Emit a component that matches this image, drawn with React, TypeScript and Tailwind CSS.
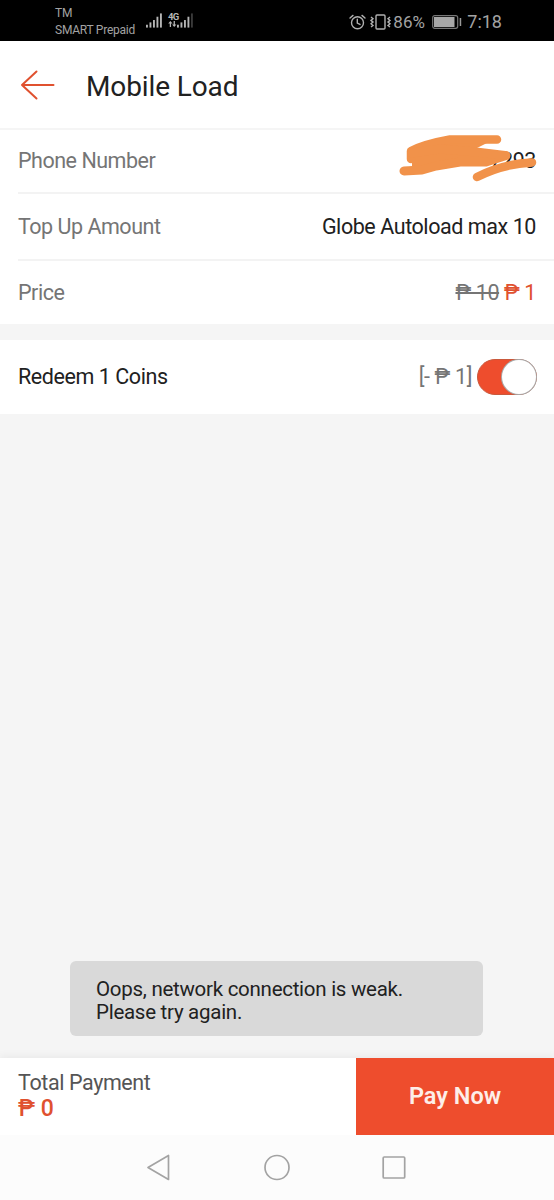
import React, { useState } from 'react';

const labelText = "text-[21.5px] leading-6 tracking-[-0.48px] text-[#757575]";
const valueText = "text-[21.5px] leading-6 tracking-[-0.43px] text-[#212121]";

function SignalBars({ dimLast = false }: { dimLast?: boolean }) {
    return (
        <svg width="17" height="15" viewBox="0 0 18 15" fill="#b5b5b5">
            <rect x="0" y="12" width="2" height="3" />
            <rect x="3.7" y="9.5" width="2" height="5.5" />
            <rect x="7.4" y="7" width="2" height="8" />
            <rect x="11.1" y="3.5" width="2" height="11.5" />
            <rect x="14.8" y="0" width="2" height="15" fill={dimLast ? '#3a3a3a' : '#b5b5b5'} />
        </svg>
    );
}

function StatusBar() {
    return (
        <div className="h-[41px] bg-black flex items-start text-[#a3a3a3]">
            <div className="ml-[55px] w-[91px] pt-[5px] text-[12px] leading-[17px] tracking-[-0.25px] whitespace-nowrap">
                <p>TM</p>
                <p>SMART Prepaid</p>
            </div>
            <div className="mt-[13px]"><SignalBars /></div>
            <div className="ml-[5px] mt-[12px] w-[10px] h-[18px]">
                <p className="text-[9.5px] leading-[9px] font-bold tracking-[-0.8px] text-[#b5b5b5]">4G</p>
                <svg width="9" height="6" viewBox="0 0 10 7" fill="#b5b5b5">
                    <path d="M2.5 0L5 3H3.3V7H1.8V3H0z" />
                    <path d="M7 7L4.6 4H6.3V0H7.8V4H9.5z" />
                </svg>
            </div>
            <div className="mt-[13px] -ml-px"><SignalBars dimLast /></div>

            <div className="ml-auto mr-[52px] h-[43px] flex items-center">
                {/* alarm */}
                <svg width="17" height="16" viewBox="0 0 17 16" fill="none" stroke="#b0b0b0" strokeWidth="1.4" strokeLinecap="round">
                    <circle cx="8.5" cy="8.7" r="6" />
                    <path d="M8.3 5.2V9L11 10.4M1 4L4 1.4M16 4L13 1.4" />
                </svg>
                {/* vibrate */}
                <svg className="ml-[4px]" width="22" height="16" viewBox="0 0 22 16" fill="none" stroke="#b0b0b0" strokeWidth="1.4">
                    <rect x="6" y="1" width="9" height="14" rx="1" />
                    <path d="M1 3L3 4.7L1 6.4L3 8.1L1 9.8L3 11.5L1 13M20 3L18 4.7L20 6.4L18 8.1L20 9.8L18 11.5L20 13" />
                </svg>
                <span className="ml-px w-[39px] text-[17px] leading-5 tracking-[0.1px] whitespace-nowrap">86%</span>
                {/* battery */}
                <svg width="30" height="14" viewBox="0 0 30 14" fill="none">
                    <rect x="0.7" y="0.7" width="25" height="12.6" rx="2" stroke="#777" strokeWidth="1.2" />
                    <rect x="2" y="2" width="20.5" height="10" fill="#a8a8a8" />
                    <rect x="27.7" y="3" width="1.5" height="8" fill="#999" />
                </svg>
                <span className="ml-[5px] text-[18px] leading-5">7:18</span>
            </div>
        </div>
    );
}

function Row({ label, children }: { label: string; children: React.ReactNode }) {
    return (
        <div className="h-full pr-[18px] flex items-center justify-between">
            <span className={labelText}>{label}</span>
            {children}
        </div>
    );
}

export default function App() {
    const [redeem, setRedeem] = useState(true);

    return (
        <div className="w-[554px] h-[1200px] flex flex-col bg-[#f5f5f5] font-['Roboto',sans-serif] overflow-hidden">
            <StatusBar />

            <header className="h-[87px] bg-white flex items-center">
                <svg className="ml-[20px]" width="35" height="30" viewBox="0 0 35 30" fill="none" stroke="#e0512f" strokeWidth="2" strokeLinecap="round" strokeLinejoin="round">
                    <path d="M33.5 15H2M16.5 1.5L2 15L16.5 28.5" />
                </svg>
                <h1 className="ml-[31px] mt-[4px] text-[28px] leading-8 tracking-[-0.12px] text-[#212121]">Mobile Load</h1>
            </header>

            <section className="bg-white border-t-2 border-[#f5f5f5] pl-[18px]">
                <div className="h-[64px] border-b-2 border-[#f3f3f3]">
                    <Row label="Phone Number">
                        <div className="relative pt-px">
                            <span className={valueText}>7293</span>
                            {/* scribble over the number */}
                            <svg className="absolute -right-[2px] -top-[16px]" width="140" height="50" viewBox="398 132 140 50" fill="none" stroke="#f1924a" strokeLinecap="round" strokeLinejoin="round">
                                <path d="M412 148L424 144L440 140L462 138H497L477 148L505 156L490 164L460 166L452 165L445 169L435 166H412Z" fill="#f1924a" stroke="none" />
                                <path d="M497 139.5H450Q425 144 411 151V159" strokeWidth="8.5" />
                                <path d="M404 171L422 170L436 166L460 162H486L506 155.5" strokeWidth="9" />
                                <path d="M412 153L440 149L476 152L505 155.5" strokeWidth="9" />
                                <path d="M477 177Q502 164 532 162.5" strokeWidth="8.5" />
                            </svg>
                        </div>
                    </Row>
                </div>
                <div className="h-[67px] border-b-2 border-[#f3f3f3]">
                    <Row label="Top Up Amount">
                        <span className={valueText}>Globe Autoload max 10</span>
                    </Row>
                </div>
                <div className="h-[63px]">
                    <Row label="Price">
                        <span className="text-[21.5px] leading-6 tracking-[-0.4px] text-[#e0512f]">
                            <span className="text-[#757575] line-through decoration-[1.5px]">₱ 10</span> ₱ 1
                        </span>
                    </Row>
                </div>
            </section>

            <section className="mt-[16px] h-[74px] bg-white pl-[18px] pr-[17px] flex items-center">
                <span className={valueText}>Redeem 1 Coins</span>
                <span className="ml-auto mr-[5px] text-[21.5px] leading-6 tracking-[-0.35px] text-[#757575]">[- ₱ 1]</span>
                <button
                    onClick={() => setRedeem(!redeem)}
                    className={`w-[60px] h-[36px] rounded-full border border-[#c9593c] flex items-center ${redeem ? 'bg-[#ee4d2d] justify-end' : 'bg-gray-300 justify-start'}`}
                >
                    <span className="size-[34px] rounded-full bg-white shadow-[0_0_0_1px_#aaa]" />
                </button>
            </section>

            <main className="flex-1 flex flex-col justify-end">
                <div className="ml-[70px] w-[413px] h-[75px] mb-[22px] rounded-md bg-[#d9d9d9] pl-[26px] pt-[17px] text-[20.5px] leading-[23px] tracking-[-0.27px] text-[#212121]">
                    <p>Oops, network connection is weak.</p>
                    <p>Please try again.</p>
                </div>
            </main>

            <footer className="h-[77px] bg-white flex shadow-[0_-2px_8px_rgba(0,0,0,0.05)]">
                <div className="flex-1 pl-[18px] pt-[12px]">
                    <p className="text-[21.5px] leading-[26px] tracking-[-0.4px] text-[#555]">Total Payment</p>
                    <p className="text-[23px] leading-[26px] font-medium text-[#e0512f]">₱ 0</p>
                </div>
                <button className="w-[198px] bg-[#ee4d2d] text-[23.5px] font-semibold text-[#fdeee9]">Pay Now</button>
            </footer>

            <nav className="h-[65px] bg-[#fcfcfc]">
                <svg width="554" height="65" viewBox="0 0 554 65" fill="none" stroke="#a3a3a3" strokeWidth="1.7" strokeLinejoin="round">
                    <path d="M148 32.5L168.500 20.5V44.5Z" />
                    <circle cx="277" cy="32.5" r="12" />
                    <rect x="383.2" y="22" width="21.5" height="21" rx="1" />
                </svg>
            </nav>
        </div>
    );
}
